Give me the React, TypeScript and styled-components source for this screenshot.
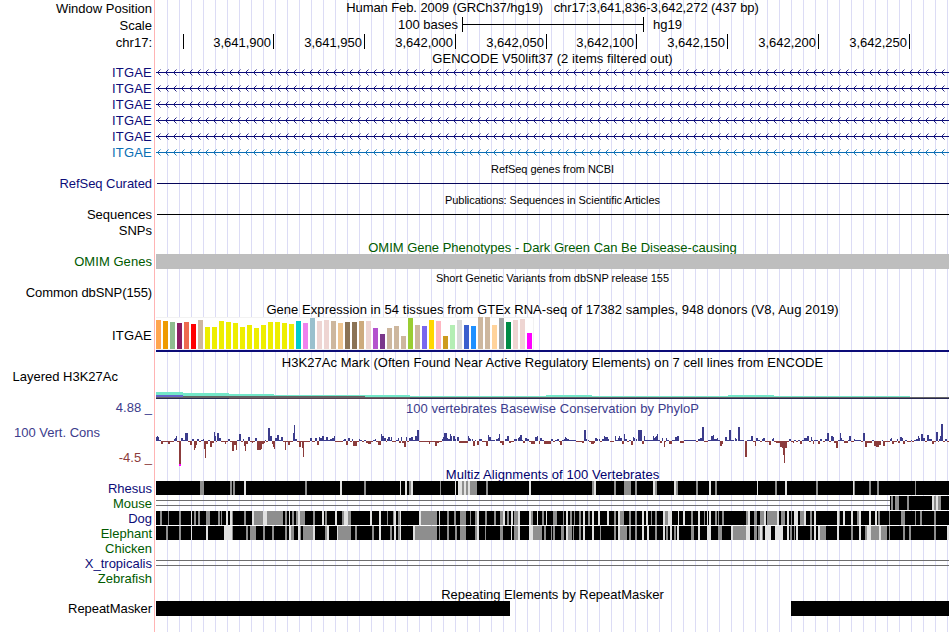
import React, { ReactNode } from "react";
import styled, { createGlobalStyle } from "styled-components";

const GlobalStyle = createGlobalStyle`
  body {
    margin: 0;
    background: #fff;
  }
`;

const LEFT = 156;
const WIDTH = 793;

const Browser = styled.div`
  width: 949px;
  height: 632px;
  overflow: hidden;
  color: #000;
  font-family: "Liberation Sans", Arial, sans-serif;
  font-size: 13px;
  background:
    linear-gradient(#ffb4b4, #ffb4b4) 154px 0 / 1px 100% no-repeat,
    repeating-linear-gradient(to right, #dcdcf5 0 1px, transparent 1px 12px) 167px 0 / 782px 100% no-repeat;
`;

const Row = styled.div<{ $h: number }>`
  display: grid;
  grid-template-columns: 152px ${WIDTH}px;
  grid-template-rows: 100%;
  column-gap: 4px;
  height: ${(p) => p.$h}px;
`;

const Label = styled.div<{ $color?: string; $top?: number; $space?: number; $end?: number }>`
  padding-top: ${(p) => p.$top ?? 0}px;
  padding-right: ${(p) => p.$end ?? 0}px;
  line-height: 16px;
  text-align: right;
  white-space: pre;
  letter-spacing: ${(p) => p.$space ?? 0}px;
  color: ${(p) => p.$color ?? "#000"};
`;

const TitleText = styled.div<{ $color?: string; $small?: boolean; $space?: number; $top?: number }>`
  grid-column: 2;
  padding-top: ${(p) => p.$top ?? 0}px;
  line-height: 16px;
  text-align: center;
  white-space: pre;
  font-size: ${(p) => (p.$small ? 11 : 13)}px;
  letter-spacing: ${(p) => p.$space ?? 0}px;
  color: ${(p) => p.$color ?? "#000"};
`;

const Chart = styled.svg`
  display: block;
  grid-column: 2;
  width: ${WIDTH}px;
  height: 100%;
`;

const Wiggle = styled(Chart)`
  height: 50px;
`;

const ConservationTrack = styled.div`
  display: grid;
  grid-template-rows: 16px 50px;

  & > * {
    grid-column: 1;
  }
`;

const ScaleBar = styled.div`
  display: flex;
  line-height: 16px;
  padding-top: 1px;
`;

const ScaleText = styled.span<{ $w: number; $right?: boolean }>`
  width: ${(p) => p.$w}px;
  text-align: ${(p) => (p.$right ? "right" : "left")};
`;

const Bracket = styled.div`
  box-sizing: border-box;
  width: 182px;
  height: 15px;
  margin: 0 9px 0 4px;
  border: solid #000;
  border-width: 0 1px;
  background: linear-gradient(#000, #000) 0 7px / 100% 1px no-repeat;
`;

const Ruler = styled.div`
  display: flex;
  padding-top: 1px;
`;

const Tick = styled.div<{ $w: number }>`
  box-sizing: border-box;
  width: ${(p) => p.$w}px;
  height: 15px;
  padding-right: 2px;
  border-right: 1px solid #000;
  line-height: 18px;
  text-align: right;
`;

const Bar = styled.div<{ $w: number; $color: string; $start?: number }>`
  width: ${(p) => p.$w}px;
  height: 15px;
  margin-left: ${(p) => p.$start ?? 0}px;
  background: ${(p) => p.$color};
`;

const Bars = styled.div`
  display: flex;
`;

const Expression = styled.div`
  box-sizing: border-box;
  height: 35px;
  border-bottom: 2px solid #0c0c78;
`;

const TissueBox = styled.div`
  box-sizing: border-box;
  display: flex;
  align-items: flex-end;
  gap: 2px;
  width: 378px;
  height: 33px;
  border: 1px solid #f2f2f2;
  border-left: 0;
  background: #fff;
`;

const Tissue = styled.div<{ $h: number; $color: string }>`
  flex: none;
  width: 5px;
  height: ${(p) => p.$h}px;
  background: ${(p) => p.$color};
`;

const ConservationLabels = styled.div`
  display: grid;
  grid-template-rows: 25px 25px 16px;
`;

const NAVY = "#0c0c78";
const GREEN = "#005a00";
const WIG_BLUE = "#3c3c8c";
const WIG_RED = "#8c3c3c";

const ticks: [number, string][] = [
  [28, ""],
  [90, "3,641,900"],
  [91, "3,641,950"],
  [91, "3,642,000"],
  [91, "3,642,050"],
  [90, "3,642,100"],
  [91, "3,642,150"],
  [91, "3,642,200"],
  [91, "3,642,250"],
];

// height and colour of each GTEx tissue
const Y = "#eeee00";
const tissues: [number, string][] = [
  [29, "#ffa54f"], [28, "#ee9a00"], [27, "#8fbc8f"], [26, "#8b1c62"], [27, "#ee6a50"],
  [25, "#ff0000"], [29, "#cdb79e"], [22, Y], [22, Y], [28, Y], [27, Y], [26, Y], [22, Y],
  [24, Y], [21, Y], [24, Y], [27, Y], [27, Y], [26, Y], [25, Y], [28, "#00cdcd"],
  [26, "#ee82ee"], [31, "#9ac0cd"], [28, "#eed5d2"], [29, "#eed5d2"], [28, "#cdb79e"],
  [26, "#eec591"], [27, "#8b7355"], [27, "#8b7355"], [28, "#cdaa7d"], [28, "#eed5d2"],
  [21, "#b452cd"], [15, "#7a378b"], [21, "#cdb79e"], [23, "#cdb79e"], [13, "#cdb79e"],
  [31, "#9acd32"], [24, "#cdb79e"], [23, "#7a67ee"], [29, "#ffd700"], [28, "#ffb6c1"],
  [13, "#cd9b1d"], [24, "#b4eeb4"], [29, "#d9d9d9"], [24, "#3a5fcd"], [23, "#1e90ff"],
  [32, "#cdb79e"], [32, "#cdb79e"], [24, "#ffd39b"], [31, "#a6a6a6"], [27, "#008b45"],
  [29, "#eed5d2"], [30, "#eed5d2"], [16, "#ff00ff"],
];

// x,width,score - negative scores hang below the axis
const phyloP = `156,1,4 157,1,5 158,1,4 159,2,1 161,2,-3 163,5,-1 168,2,-3 170,4,-1 174,1,2 175,1,3 176,1,5
177,2,-1 179,2,-24 181,2,3 183,2,1 185,3,8 188,2,-1 190,2,-4 192,2,2 194,1,-9 195,1,-7 196,1,-4 197,2,2
199,2,-1 201,2,1 203,1,2 204,1,-8 205,1,-17 206,2,-3 208,2,1 210,2,-6 212,2,-2 214,1,9 215,1,5 216,1,-1
217,2,8 219,2,3 221,4,-1 225,1,-3 226,2,-1 228,2,2 230,2,-1 232,2,-10 234,2,-4 236,1,-9 237,2,1 239,2,7
241,2,-1 243,1,2 244,1,-5 245,1,-10 246,2,-3 248,2,4 250,2,-1 252,1,-2 253,2,-1 255,2,3 257,4,-9 261,1,-8
262,2,-3 264,1,-2 265,1,1 266,2,-1 268,2,13 270,2,5 272,1,-3 273,1,-6 274,1,-8 275,2,3 277,2,6 279,2,1
281,2,4 283,2,-1 285,1,-9 286,2,-1 288,2,-4 290,3,-1 293,1,8 294,1,16 295,2,2 297,2,-1 299,2,-6 301,1,-1
302,1,-7 303,1,-16 304,6,-1 310,2,3 312,3,-1 315,2,3 317,2,-4 319,1,4 320,2,3 322,2,5 324,2,1 326,2,4
328,2,1 330,2,2 332,2,3 334,1,5 335,8,-1 343,1,1 344,2,2 346,2,-4 348,2,3 350,2,-1 352,1,2 353,4,-5
357,2,-1 359,1,2 360,2,1 362,2,-1 364,2,1 366,2,-2 368,3,-3 371,2,-1 373,2,1 375,1,2 376,2,-1 378,3,-4
381,1,7 382,2,5 384,2,3 386,1,-1 387,1,2 388,2,4 390,1,1 391,1,4 392,4,-1 396,2,1 398,1,3 399,2,-2
401,1,4 402,2,-2 404,2,-6 406,1,4 407,2,-1 409,2,3 411,2,4 413,2,1 415,2,5 417,2,11 419,10,-1 429,1,-3
430,5,-1 435,2,-5 437,2,-2 439,3,-1 442,1,2 443,1,4 444,3,8 447,1,3 448,2,2 450,1,7 451,1,5 453,2,5
455,1,2 457,2,4 459,9,-2 468,1,5 469,1,3 470,1,2 472,1,2 473,2,-5 475,1,1 477,2,-4 479,3,2 482,4,-1
486,2,-5 488,1,6 489,2,4 491,3,1 494,1,1 496,2,2 498,1,3 499,1,7 500,2,-2 502,2,-4 505,2,2 507,2,5
509,2,-2 511,3,-1 514,2,2 516,1,2 518,1,3 519,1,4 520,2,6 522,1,1 523,2,-2 525,2,3 527,2,2 529,2,-1
531,4,-3 535,2,4 537,1,5 539,1,-3 540,2,3 542,2,1 544,6,-3 550,1,-3 551,2,2 553,2,-1 555,2,1 557,2,2
559,1,-1 560,2,-4 562,2,1 564,1,2 565,1,4 566,1,3 567,2,2 569,7,1 576,6,-1 582,2,-2 584,2,11 586,1,2
588,1,1 589,2,-1 591,3,-3 594,1,-2 595,2,3 597,1,2 599,1,2 600,2,-1 602,2,2 604,1,5 605,3,4 608,1,2
610,4,-1 615,1,5 616,2,1 618,1,3 619,1,5 620,2,3 622,2,-3 624,1,7 625,2,2 627,2,-1 629,2,1 631,2,-4
633,1,4 634,1,3 636,1,2 638,4,11 642,2,-3 644,1,5 645,8,1 653,1,5 654,1,3 655,1,4 656,1,5 657,1,7
658,2,1 660,2,-2 662,1,3 664,1,-6 665,1,-1 666,1,3 667,2,1 669,3,-3 672,3,1 675,2,4 677,2,5 680,4,-2
684,12,1 696,2,-1 698,2,2 700,2,3 702,2,14 704,4,-1 708,3,1 711,2,5 713,1,6 714,2,2 716,1,2 717,1,3
718,2,1 720,2,-5 722,1,-3 725,2,4 727,2,1 729,2,11 731,3,1 735,1,3 736,1,2 738,2,14 740,4,1 745,2,-16
747,3,1 750,1,1 751,2,5 753,2,-1 755,1,-5 756,2,3 758,2,1 760,2,-1 762,1,2 763,2,3 765,4,-1 769,2,-4
772,1,2 773,1,3 774,2,-1 776,4,-2 780,2,-6 782,1,-7 783,1,-14 784,1,-22 785,2,-7 787,2,-1 789,2,2
791,2,-1 793,1,-2 794,2,1 796,2,-1 798,2,1 800,2,-3 802,2,1 804,3,3 807,2,5 809,2,-1 811,1,4 812,1,1
813,1,-3 814,4,1 818,2,-3 820,2,2 823,2,-1 825,2,2 827,2,8 829,2,-1 831,2,5 833,1,4 834,2,-2 836,2,-7
838,2,1 840,1,8 841,1,3 842,2,1 844,4,-2 848,1,1 849,2,5 851,3,-1 854,1,2 855,6,1 861,2,-1 863,2,8
865,2,-6 867,5,-2 872,2,1 874,2,-5 876,3,-6 879,2,-4 882,1,1 883,2,-5 885,5,-1 890,1,2 891,1,3 892,2,-3
894,3,-1 897,1,2 898,2,-2 900,2,4 902,1,3 903,2,-3 905,2,1 907,4,-1 911,1,1 912,2,-1 914,2,1 916,2,2
918,1,5 919,1,3 921,2,7 923,2,3 925,2,-1 927,2,6 929,3,2 932,2,-3 934,2,-1 936,2,9 938,1,-1 939,1,2
940,1,5 941,2,17 943,2,-1 945,2,2 947,2,-1`
  .split(/\s+/)
  .map((s) => s.split(",").map(Number));

// x,width of the weaker (mid) and weakest (pale) stretches in each alignment
type Alignment = { from: number; mid: string; pale: string };

const rhesus: Alignment = {
  from: 156,
  mid: `200,4 230,2 233,2 305,2 364,2 409,2 440,1 462,2 466,2 470,7 486,2 592,2 614,2 624,7 635,2 655,2
676,2 696,2 715,2 775,2 816,2 854,1 869,2 877,2 915,1`,
  pale: `244,2 340,2 400,1 405,2 411,2 455,1 458,4 464,2 468,2 529,2 594,2 653,2 674,2 709,2 757,1 785,2 853,1`,
};

const mouse: Alignment = {
  from: 890,
  mid: "891,2 895,4 907,2 934,2 938,3",
  pale: "932,2 936,2",
};

const dog: Alignment = {
  from: 156,
  mid: `160,2 168,1 179,2 194,2 198,2 206,4 218,2 221,1 232,1 244,2 254,9 267,16 285,2 292,2 296,2 300,5
313,2 325,2 342,2 348,3 387,1 393,1 398,2 421,16 447,2 454,2 460,6 470,1 475,2 485,2 494,2 500,3 507,2 514,4
531,2 542,2 553,4 563,1 570,2 574,1 579,2 588,2 614,2 620,4 629,2 635,2 651,1 655,2 665,3 691,2 704,1 715,2
718,1 722,2 746,2 754,3 760,4 767,10 781,4 791,1 800,4 810,2 839,1 857,2 878,2 889,1 901,4 915,1 920,2 934,2`,
  pale: `191,1 226,2 230,2 252,2 263,4 289,1 298,2 322,2 335,2 344,4 370,2 379,2 394,2 400,1 419,2 439,1
477,2 503,2 511,2 518,2 529,2 537,1 546,1 566,2 583,2 592,2 598,2 607,2 618,2 642,2 646,2 663,2 668,4 678,1
683,2 698,2 707,1 709,2 748,2 764,2 777,2 787,2 794,4 804,2 814,2 837,2 843,2 851,2 859,2 869,2 875,2`,
};

const elephant: Alignment = {
  from: 156,
  mid: `166,2 179,2 232,1 246,2 250,6 263,2 272,2 285,2 291,3 300,1 303,10 325,2 338,13 355,2 372,2 390,2
398,2 415,22 439,1 447,2 455,2 460,6 475,2 485,1 500,3 514,4 533,9 544,2 551,1 553,2 561,3 568,4 573,1 579,2
600,1 614,2 620,7 629,2 635,2 655,2 666,2 674,2 691,3 718,4 733,13 754,3 758,2 762,1 790,2 794,1 810,2 820,6
851,2 865,2 871,8 881,6 889,1 903,2 909,2 934,2`,
  pale: `191,1 206,2 224,8 289,2 298,2 313,2 327,2 337,1 379,2 394,2 400,1 413,2 477,2 511,1 518,2 529,4
566,2 583,2 592,2 618,2 642,2 647,2 663,2 670,2 677,2 698,2 707,4 731,2 746,4 760,2 765,6 775,8 787,2 796,2
814,2 818,2 837,2 859,2 867,4 879,2 947,2`,
};

const spans = (list: string) => list.split(/\s+/).map((s) => s.split(",").map(Number));

function Title({ h, children, ...rest }: { h: number; children: ReactNode; $color?: string; $small?: boolean; $space?: number; $top?: number }) {
  return (
    <Row $h={h}>
      <TitleText {...rest}>{children}</TitleText>
    </Row>
  );
}

function Intron({ color }: { color: string }) {
  const tips = Array.from({ length: 99 }, (_, i) => 1.5 + i * 8);
  return (
    <Chart viewBox={`0 0 ${WIDTH} 16`}>
      <rect x={0} y={8} width={WIDTH} height={1} fill={color} />
      <path
        d={tips.map((x) => `M${x + 3} 5.5L${x} 8.5L${x + 3} 11.5`).join("")}
        fill="none"
        stroke={color}
        strokeWidth={0.9}
      />
    </Chart>
  );
}

function Gene({ color = NAVY }: { color?: string }) {
  return (
    <Row $h={16}>
      <Label $color={color} $top={1} $space={0.2}>ITGAE</Label>
      <Intron color={color} />
    </Row>
  );
}

function AlignmentRow({ name, color, data, gap }: { name: string; color: string; data?: Alignment; gap?: boolean }) {
  return (
    <Row $h={15}>
      <Label $color={color}>{name}</Label>
      <Chart viewBox={`${LEFT} 0 ${WIDTH} 15`} shapeRendering="crispEdges">
        {gap && <path d={`M${LEFT} 4.5H${data ? data.from : 949}M${LEFT} 9.5H${data ? data.from : 949}`} stroke="#6e6e6e" />}
        {data && <rect x={data.from} y={0} width={949 - data.from} height={14} />}
        {data && spans(data.mid).map(([x, w]) => <rect key={x} x={x} y={0} width={w} height={14} fill="#8e8e8e" />)}
        {data && spans(data.pale).map(([x, w]) => <rect key={x} x={x} y={0} width={w} height={14} fill="#e1e1e1" />)}
      </Chart>
    </Row>
  );
}

export default function App() {
  return (
    <Browser>
      <GlobalStyle />
      <Row $h={16}>
        <Label $top={1}>Window Position</Label>
        <TitleText $space={-0.09}>{"Human Feb. 2009 (GRCh37/hg19)   chr17:3,641,836-3,642,272 (437 bp)"}</TitleText>
      </Row>
      <Row $h={17}>
        <Label $top={2}>Scale</Label>
        <ScaleBar>
          <ScaleText $w={302} $right>100 bases</ScaleText>
          <Bracket />
          <ScaleText $w={60}>hg19</ScaleText>
        </ScaleBar>
      </Row>
      <Row $h={18}>
        <Label $top={2}>chr17:</Label>
        <Ruler>
          {ticks.map(([w, text]) => (
            <Tick key={w + text} $w={w}>{text}</Tick>
          ))}
        </Ruler>
      </Row>
      <Title h={13} $space={0.05}>GENCODE V50lift37 (2 items filtered out)</Title>
      <Gene />
      <Gene />
      <Gene />
      <Gene />
      <Gene />
      <Gene color="#0a6eb4" />

      <Title h={15} $small $top={1} $space={-0.05}>RefSeq genes from NCBI</Title>
      <Row $h={16}>
        <Label $color={NAVY} $top={1} $space={-0.05}>RefSeq Curated</Label>
        <Chart viewBox={`0 0 ${WIDTH} 16`}>
          <rect x={1} y={8} width={WIDTH} height={1} fill="#06065a" />
        </Chart>
      </Row>
      <Title h={15} $small $top={1} $space={-0.06}>Publications: Sequences in Scientific Articles</Title>
      <Row $h={16}>
        <Label $top={1}>Sequences</Label>
        <Chart viewBox={`0 0 ${WIDTH} 16`}>
          <rect x={1} y={8} width={WIDTH} height={1} />
        </Chart>
      </Row>
      <Row $h={16}>
        <Label $top={1}>SNPs</Label>
      </Row>

      <Title h={16} $top={2} $color={GREEN}>OMIM Gene Phenotypes - Dark Green Can Be Disease-causing</Title>
      <Row $h={16}>
        <Label $color={GREEN} $space={0.05}>OMIM Genes</Label>
        <Bar $w={WIDTH} $color="#bebebe" />
      </Row>
      <Title h={15} $small>Short Genetic Variants from dbSNP release 155</Title>
      <Row $h={16}>
        <Label $space={-0.1}>Common dbSNP(155)</Label>
      </Row>

      <Title h={16} $top={1} $space={0.055}>Gene Expression in 54 tissues from GTEx RNA-seq of 17382 samples, 948 donors (V8, Aug 2019)</Title>
      <Row $h={37}>
        <Label $top={11} $space={0.2}>ITGAE</Label>
        <Expression>
          <TissueBox>
            {tissues.map(([h, color], i) => (
              <Tissue key={i} $h={h} $color={color} />
            ))}
          </TissueBox>
        </Expression>
      </Row>

      <Title h={15} $top={1} $space={0.045}>H3K27Ac Mark (Often Found Near Active Regulatory Elements) on 7 cell lines from ENCODE</Title>
      <Row $h={31}>
        <Label $end={34}>Layered H3K27Ac</Label>
        <Chart viewBox={`${LEFT} 369 ${WIDTH} 31`} shapeRendering="crispEdges">
          <path d="M156 392h27v1h46v1h45v1h136v1h136v-1h46v1h136v-1h46v1h136v1h39v1H156z" fill="#73e6c8" />
          <path d="M156 396h209v1h584v1H156z" fill="#646464" />
          <rect x={156} y={395} width={27} height={2} fill="#6464c8" />
          <rect x={156} y={398} width={WIDTH} height={1} fill="#282850" />
          <rect x={229} y={398} width={181} height={1} fill="#5a3c50" />
        </Chart>
      </Row>

      <Row $h={66}>
        <ConservationLabels>
          <Label $color={WIG_BLUE}>4.88 _</Label>
          <Label $color={WIG_BLUE} $end={52}>100 Vert. Cons</Label>
          <Label $color={WIG_RED}>-4.5 _</Label>
        </ConservationLabels>
        <ConservationTrack>
          <TitleText $color={WIG_BLUE} $top={1} $space={0.02}>100 vertebrates Basewise Conservation by PhyloP</TitleText>
          <Wiggle viewBox={`${LEFT} 416 ${WIDTH} 50`} shapeRendering="crispEdges">
            {phyloP.map(([x, w, v]) => (
              <rect key={x} x={x} y={v > 0 ? 441 - v : 441} width={w} height={Math.abs(v)} fill={v > 0 ? WIG_BLUE : WIG_RED} />
            ))}
            <rect x={179} y={464} width={2} height={2} fill="#ff00ff" />
          </Wiggle>
        </ConservationTrack>
      </Row>

      <Title h={15} $top={1} $space={0.07} $color="#00006e">Multiz Alignments of 100 Vertebrates</Title>
      <AlignmentRow name="Rhesus" color={NAVY} data={rhesus} />
      <AlignmentRow name="Mouse" color={GREEN} data={mouse} gap />
      <AlignmentRow name="Dog" color={NAVY} data={dog} />
      <AlignmentRow name="Elephant" color={GREEN} data={elephant} />
      <AlignmentRow name="Chicken" color={GREEN} />
      <AlignmentRow name="X_tropicalis" color={NAVY} gap />
      <AlignmentRow name="Zebrafish" color={GREEN} />

      <Title h={15} $top={1}>Repeating Elements by RepeatMasker</Title>
      <Row $h={15}>
        <Label $space={-0.05}>RepeatMasker</Label>
        <Bars>
          <Bar $w={354} $color="#000" />
          <Bar $w={158} $color="#000" $start={281} />
        </Bars>
      </Row>
    </Browser>
  );
}
